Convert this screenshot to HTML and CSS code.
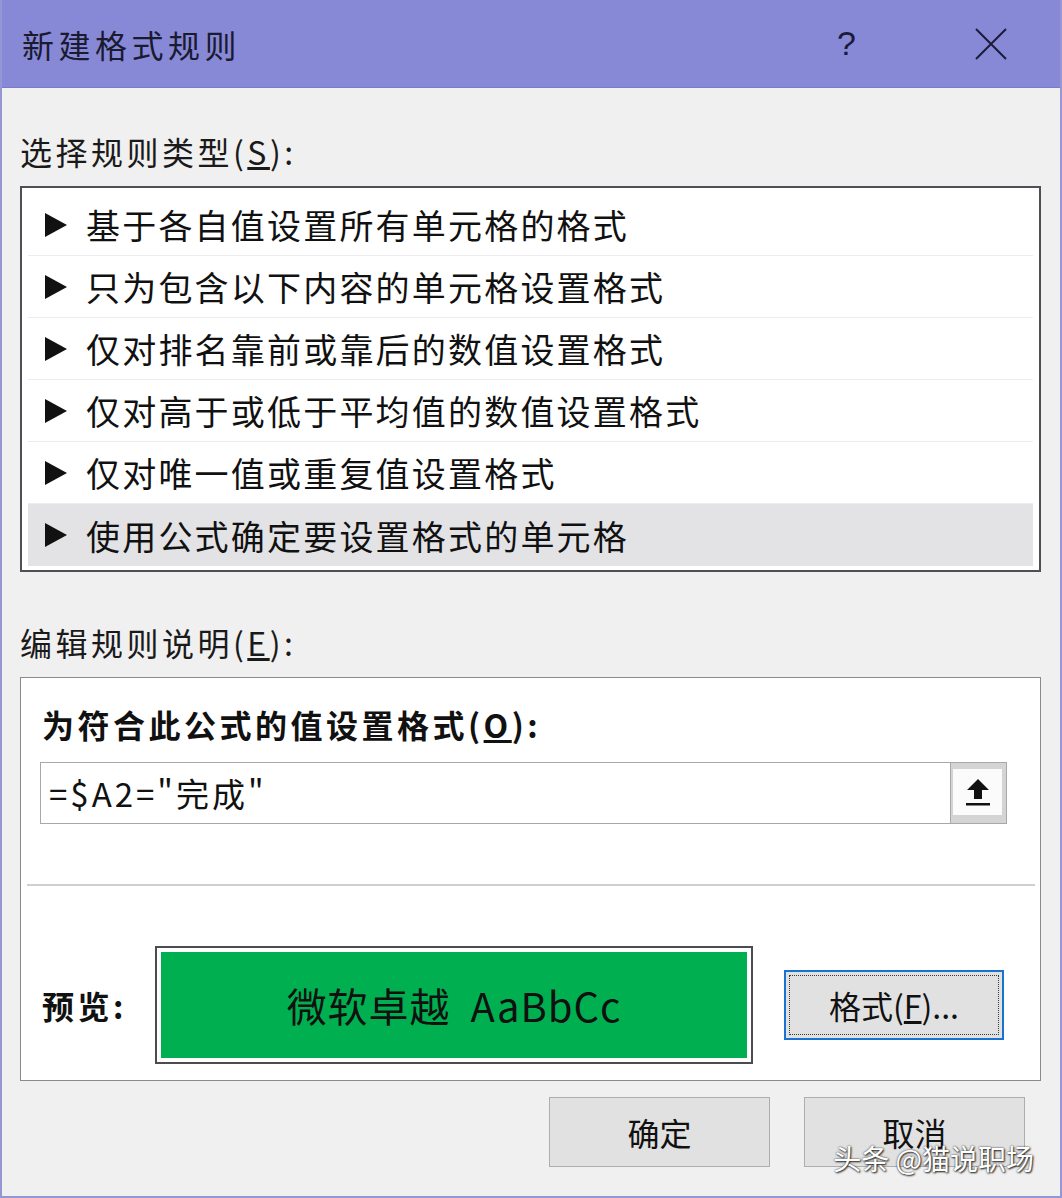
FILE: index.html
```html
<!DOCTYPE html>
<html lang="zh-CN">
<head>
    <meta charset="UTF-8">
    <meta name="viewport" content="width=device-width, initial-scale=1.0">
    <title>新建格式规则</title>
    <link rel="stylesheet" href="styles.css">
</head>
<body>
<div class="window">
    <div class="titlebar">
        <span class="title">新建格式规则</span>
        <span class="help">?</span>
        <span class="close">
            <svg width="34" height="34" viewBox="0 0 34 34"><path d="M2 2 L32 32 M32 2 L2 32" stroke="#1b1b3a" stroke-width="2" fill="none"/></svg>
        </span>
    </div>

    <div class="content">
        <div class="label first">选择规则类型(<u>S</u>):</div>
        <ul class="rules">
            <li><span class="arrow"></span>基于各自值设置所有单元格的格式</li>
            <li><span class="arrow"></span>只为包含以下内容的单元格设置格式</li>
            <li><span class="arrow"></span>仅对排名靠前或靠后的数值设置格式</li>
            <li><span class="arrow"></span>仅对高于或低于平均值的数值设置格式</li>
            <li><span class="arrow"></span>仅对唯一值或重复值设置格式</li>
            <li class="selected"><span class="arrow"></span>使用公式确定要设置格式的单元格</li>
        </ul>

        <div class="label second">编辑规则说明(<u>E</u>):</div>
        <div class="rulebox">
            <div class="bold-label">为符合此公式的值设置格式(<u>O</u>):</div>
            <div class="formula">
                <span class="formula-text">=$A2="完成"</span>
                <span class="picker">
                    <span class="picker-inner">
                        <svg width="26" height="30" viewBox="0 0 26 30"><path d="M13 2 L24 13 L17 13 L17 22 L9 22 L9 13 L2 13 Z" fill="#111"/><rect x="1" y="26" width="24" height="2.5" fill="#111"/></svg>
                    </span>
                </span>
            </div>
            <div class="divider"></div>
            <div class="preview-row">
                <div class="bold-label preview-label">预览:</div>
                <div class="preview">
                    <div class="preview-fill">微软卓越&nbsp;&nbsp;AaBbCc</div>
                </div>
                <button class="btn format-btn"><span class="focus">格式(<u>F</u>)...</span></button>
            </div>
        </div>

        <div class="actions">
            <button class="btn">确定</button>
            <button class="btn">取消</button>
        </div>
    </div>
    <div class="watermark">头条 @猫说职场</div>
</div>
</body>
</html>
```

FILE: styles.css
```css
body {
    margin: 0;
    padding: 0;
    font-family: "Noto Sans CJK SC", "Noto Sans", sans-serif;
    color: #111;
    background: #f0f0f0;
}
.window {
    position: relative;
    width: 1062px;
    height: 1198px;
    box-sizing: border-box;
    border: 2px solid #9597d4;
    border-top: none;
    background: #f0f0f0;
    overflow: hidden;
}
.titlebar {
    height: 88px;
    box-sizing: border-box;
    background: #8789d7;
    border-bottom: 1px solid #7a7cc6;
    display: flex;
    align-items: center;
    padding-left: 20px;
}
.title {
    font-size: 32px;
    letter-spacing: 4.5px;
    color: #1a1a30;
    flex: 1;
}
.help {
    font-family: "Liberation Sans", sans-serif;
    font-size: 34px;
    color: #1b1b3a;
    margin-right: 118px;
}
.close {
    display: flex;
    margin-right: 52px;
}
.content {
    padding: 0 19px 0 18px;
}
.label {
    font-size: 32px;
    line-height: 40px;
    height: 40px;
    letter-spacing: 3.5px;
    color: #1a1a1a;
}
.label.first {
    margin-top: 43px;
}
.label.second {
    margin-top: 50px;
}
.rules {
    list-style: none;
    margin: 15px 0 0 0;
    padding: 6px 6px 3px 6px;
    height: 386px;
    box-sizing: border-box;
    border: 2px solid #4f4f55;
    background: #fff;
}
.rules li {
    height: 62px;
    box-sizing: border-box;
    border-bottom: 1px solid #ececef;
    display: flex;
    align-items: center;
    padding-left: 17px;
    font-size: 34px;
    letter-spacing: 2.2px;
    color: #111;
}
.rules li.selected {
    background: #e3e3e6;
    border-bottom: none;
}
.arrow {
    width: 0;
    height: 0;
    border-top: 12px solid transparent;
    border-bottom: 12px solid transparent;
    border-left: 22px solid #111;
    margin-right: 19px;
}
.rulebox {
    margin-top: 15px;
    height: 404px;
    box-sizing: border-box;
    border: 1px solid #8a8a90;
    background: #fff;
    padding: 0 5px;
}
.bold-label {
    font-size: 32px;
    font-weight: bold;
    line-height: 40px;
    letter-spacing: 3.5px;
    color: #111;
}
.rulebox > .bold-label {
    margin: 26px 0 0 16px;
}
.formula {
    display: flex;
    margin: 18px 28px 0 14px;
    height: 62px;
    box-sizing: border-box;
    border: 1px solid #a8a8a8;
}
.formula-text {
    flex: 1;
    display: flex;
    align-items: center;
    padding-left: 8px;
    font-size: 33px;
    letter-spacing: 3px;
    color: #111;
}
.picker {
    width: 56px;
    background: #d4d4d4;
    border-left: 1px solid #a8a8a8;
    padding: 6px 4px 8px 2px;
    box-sizing: border-box;
    display: flex;
}
.picker-inner {
    flex: 1;
    background: #fbfbfb;
    display: flex;
    align-items: center;
    justify-content: center;
}
.divider {
    margin: 60px 0 0 1px;
    height: 2px;
    background: #cfcfd3;
}
.preview-row {
    display: flex;
    align-items: center;
    margin-top: 60px;
    height: 118px;
}
.preview-label {
    width: 113px;
    padding-left: 16px;
}
.preview {
    width: 598px;
    height: 118px;
    box-sizing: border-box;
    border: 2px solid #4c4c50;
    padding: 4px;
    background: #fff;
}
.preview-fill {
    height: 100%;
    background: #00b050;
    display: flex;
    align-items: center;
    justify-content: center;
    font-size: 40px;
    color: #111;
    letter-spacing: 1px;
}
.btn {
    font-family: "Noto Sans CJK SC", "Noto Sans", sans-serif;
    font-size: 32px;
    color: #111;
    background: #e1e1e1;
    border: 1px solid #adadad;
    width: 221px;
    height: 70px;
    padding: 0;
    cursor: pointer;
}
.format-btn {
    margin-left: 31px;
    width: 220px;
    border: 2px solid #1a73d0;
    padding: 3px;
    display: flex;
}
.format-btn .focus {
    flex: 1;
    border: 1px dotted #3a3a3a;
    display: flex;
    align-items: center;
    justify-content: center;
}
.actions {
    display: flex;
    justify-content: flex-end;
    gap: 34px;
    margin-top: 16px;
    padding-right: 16px;
}
.watermark {
    position: absolute;
    right: 26px;
    bottom: 18px;
    font-size: 28px;
    color: #fff;
    text-shadow: 0 0 2px #333, 1px 1px 2px #222;
}
```
